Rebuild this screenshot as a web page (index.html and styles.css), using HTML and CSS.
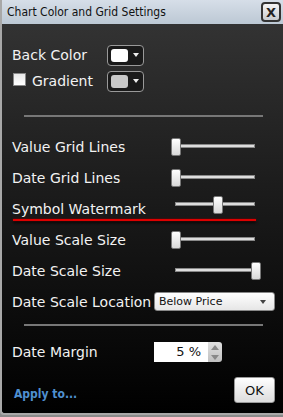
FILE: index.html
```html
<!DOCTYPE html>
<html lang="en">
<head>
  <meta charset="UTF-8" />
  <title>Chart Color and Grid Settings</title>
  <link rel="stylesheet" href="styles.css">
</head>
<body>

  <div class="dialog">

    <!-- Title bar -->
    <div class="titlebar">
      <span class="title">Chart Color and Grid Settings</span>
      <button class="close-btn">X</button>
    </div>

    <div class="content">

      <!-- Colors -->
      <div class="colors">
        <div class="color-row">
          <span class="label">Back Color</span>
          <div class="swatch-btn"><span class="swatch swatch-white"></span><span class="caret"></span></div>
        </div>
        <div class="color-row">
          <span class="label check-label"><span class="checkbox"></span>Gradient</span>
          <div class="swatch-btn"><span class="swatch swatch-gray"></span><span class="caret"></span></div>
        </div>
      </div>

      <div class="separator"></div>

      <!-- Grid sliders -->
      <div class="settings">
        <div class="row">
          <span class="label">Value Grid Lines</span>
          <div class="slider"><div class="track"></div><div class="thumb" style="left: 0%"></div></div>
        </div>
        <div class="row">
          <span class="label">Date Grid Lines</span>
          <div class="slider"><div class="track"></div><div class="thumb" style="left: 0%"></div></div>
        </div>
        <div class="row row-marked">
          <span class="label">Symbol Watermark</span>
          <div class="slider"><div class="track"></div><div class="thumb" style="left: 52%"></div></div>
          <div class="red-mark"></div>
        </div>
        <div class="row">
          <span class="label">Value Scale Size</span>
          <div class="slider"><div class="track"></div><div class="thumb" style="left: 0%"></div></div>
        </div>
        <div class="row">
          <span class="label">Date Scale Size</span>
          <div class="slider"><div class="track"></div><div class="thumb" style="left: 100%"></div></div>
        </div>
        <div class="row">
          <span class="label">Date Scale Location</span>
          <div class="select"><span>Below Price</span><span class="select-caret"></span></div>
        </div>
      </div>

      <div class="separator separator-low"></div>

      <div class="row margin-row">
        <span class="label">Date Margin</span>
        <div class="spin">
          <div class="spin-value">5 %</div>
          <div class="spin-buttons">
            <span class="spin-up"></span>
            <span class="spin-down"></span>
          </div>
        </div>
      </div>

      <!-- Footer -->
      <div class="footer">
        <a href="#" class="apply-link">Apply to...</a>
        <button class="ok-btn">OK</button>
      </div>

    </div>
  </div>

</body>
</html>
```

FILE: styles.css
```css
body {
  margin: 0;
  background-color: #8a8a8a;
  font-family: 'DejaVu Sans', sans-serif;
}

.dialog {
  width: 281px;
  height: 413px;
  border-left: 2px solid #a8a8a8;
  border-bottom: 2px solid #a8a8a8;
  border-bottom-left-radius: 4px;
  background: linear-gradient(#363636, #1c1c1c 45%, #000 100%);
  overflow: hidden;
}

/* Title bar */
.titlebar {
  display: flex;
  justify-content: space-between;
  align-items: center;
  height: 24px;
  padding: 0 2px 0 5px;
  background: linear-gradient(#d6dee8, #bcc8d4);
}

.title {
  font-family: 'DejaVu Sans Condensed', 'DejaVu Sans', sans-serif;
  font-size: 12px;
  color: #111;
}

.close-btn {
  width: 20px;
  height: 20px;
  padding: 0;
  border: 2px solid #333;
  border-radius: 4px;
  background: linear-gradient(#f4f4f4, #c8ccd0);
  font-family: 'DejaVu Sans', sans-serif;
  font-weight: bold;
  font-size: 13px;
  color: #222;
  line-height: 15px;
}

.content {
  padding: 0 0 0 10px;
}

.label {
  font-size: 14px;
  color: #f2f2f2;
}

/* Color pickers */
.colors {
  padding-top: 18px;
}

.color-row {
  display: flex;
  align-items: center;
  height: 26px;
}

.color-row .label {
  width: 95px;
}

.check-label {
  display: flex;
  align-items: center;
}

.checkbox {
  width: 11px;
  height: 11px;
  margin: 0 6px 4px 1px;
  border: 1px solid #888;
  background: linear-gradient(#e8e8e8, #ffffff);
}

.swatch-btn {
  display: flex;
  align-items: center;
  width: 32px;
  height: 19px;
  padding-left: 3px;
  border: 1px solid #999;
  border-radius: 4px;
  background: #1a1a1a;
}

.swatch {
  width: 17px;
  height: 13px;
  border-radius: 3px;
}

.swatch-white {
  background: #fff;
}

.swatch-gray {
  background: #c8c8c8;
}

.caret {
  margin-left: 5px;
  border-left: 3px solid transparent;
  border-right: 3px solid transparent;
  border-top: 4px solid #eee;
}

.separator {
  height: 2px;
  margin: 21px 20px 0 12px;
  background-color: #777;
}

.separator-low {
  margin-top: 7px;
}

/* Setting rows */
.settings {
  padding-top: 14px;
}

.row {
  position: relative;
  display: flex;
  align-items: center;
  height: 31px;
}

.row .label {
  width: 140px;
}

.slider {
  position: relative;
  width: 80px;
  height: 18px;
  margin-left: 23px;
}

.track {
  position: absolute;
  left: 0;
  right: 0;
  top: 6px;
  height: 2px;
  border: 1px solid #888;
  background: #ddd;
}

.thumb {
  position: absolute;
  top: 0;
  width: 8px;
  height: 16px;
  margin-left: -4px;
  border: 1px solid #777;
  border-radius: 2px;
  background: linear-gradient(#ffffff, #d8d8d8);
}

.row-marked .slider {
  top: -4px;
}

.red-mark {
  position: absolute;
  left: 1px;
  bottom: 3px;
  width: 243px;
  height: 2px;
  background: #d00;
  box-shadow: 0 2px 3px rgba(0, 0, 0, 0.9), 0 0 2px #900;
}

.select {
  display: flex;
  justify-content: space-between;
  align-items: center;
  width: 107px;
  height: 17px;
  margin-left: 2px;
  padding: 0 8px 0 4px;
  border: 1px solid #888;
  border-radius: 3px;
  background: linear-gradient(#ffffff, #e6e6e6);
  font-size: 11px;
  color: #111;
}

.select-caret {
  border-left: 3px solid transparent;
  border-right: 3px solid transparent;
  border-top: 4px solid #444;
}

/* Date margin */
.margin-row {
  height: 30px;
  margin-top: 11px;
}

.spin {
  display: flex;
  height: 20px;
  margin-left: 2px;
}

.spin-value {
  width: 47px;
  padding-right: 7px;
  background: #fff;
  text-align: right;
  font-size: 13px;
  line-height: 20px;
  color: #111;
}

.spin-buttons {
  display: flex;
  flex-direction: column;
  justify-content: space-around;
  align-items: center;
  width: 14px;
  border-radius: 0 3px 3px 0;
  background: linear-gradient(#e0e0e0, #c0c0c0);
}

.spin-up {
  border-left: 4px solid transparent;
  border-right: 4px solid transparent;
  border-bottom: 5px solid #888;
}

.spin-down {
  border-left: 4px solid transparent;
  border-right: 4px solid transparent;
  border-top: 5px solid #888;
}

/* Footer */
.footer {
  display: flex;
  justify-content: space-between;
  align-items: flex-end;
  margin-top: 10px;
  padding: 0 8px 0 2px;
}

.apply-link {
  margin-bottom: 2px;
  font-family: 'DejaVu Sans Condensed', 'DejaVu Sans', sans-serif;
  font-size: 12px;
  font-weight: bold;
  color: #4f90d0;
  text-decoration: none;
}

.ok-btn {
  width: 41px;
  height: 26px;
  border: 1px solid #999;
  border-radius: 3px;
  background: linear-gradient(#ffffff, #dcdcdc);
  font-family: 'DejaVu Sans', sans-serif;
  font-size: 13px;
  color: #111;
}
```
